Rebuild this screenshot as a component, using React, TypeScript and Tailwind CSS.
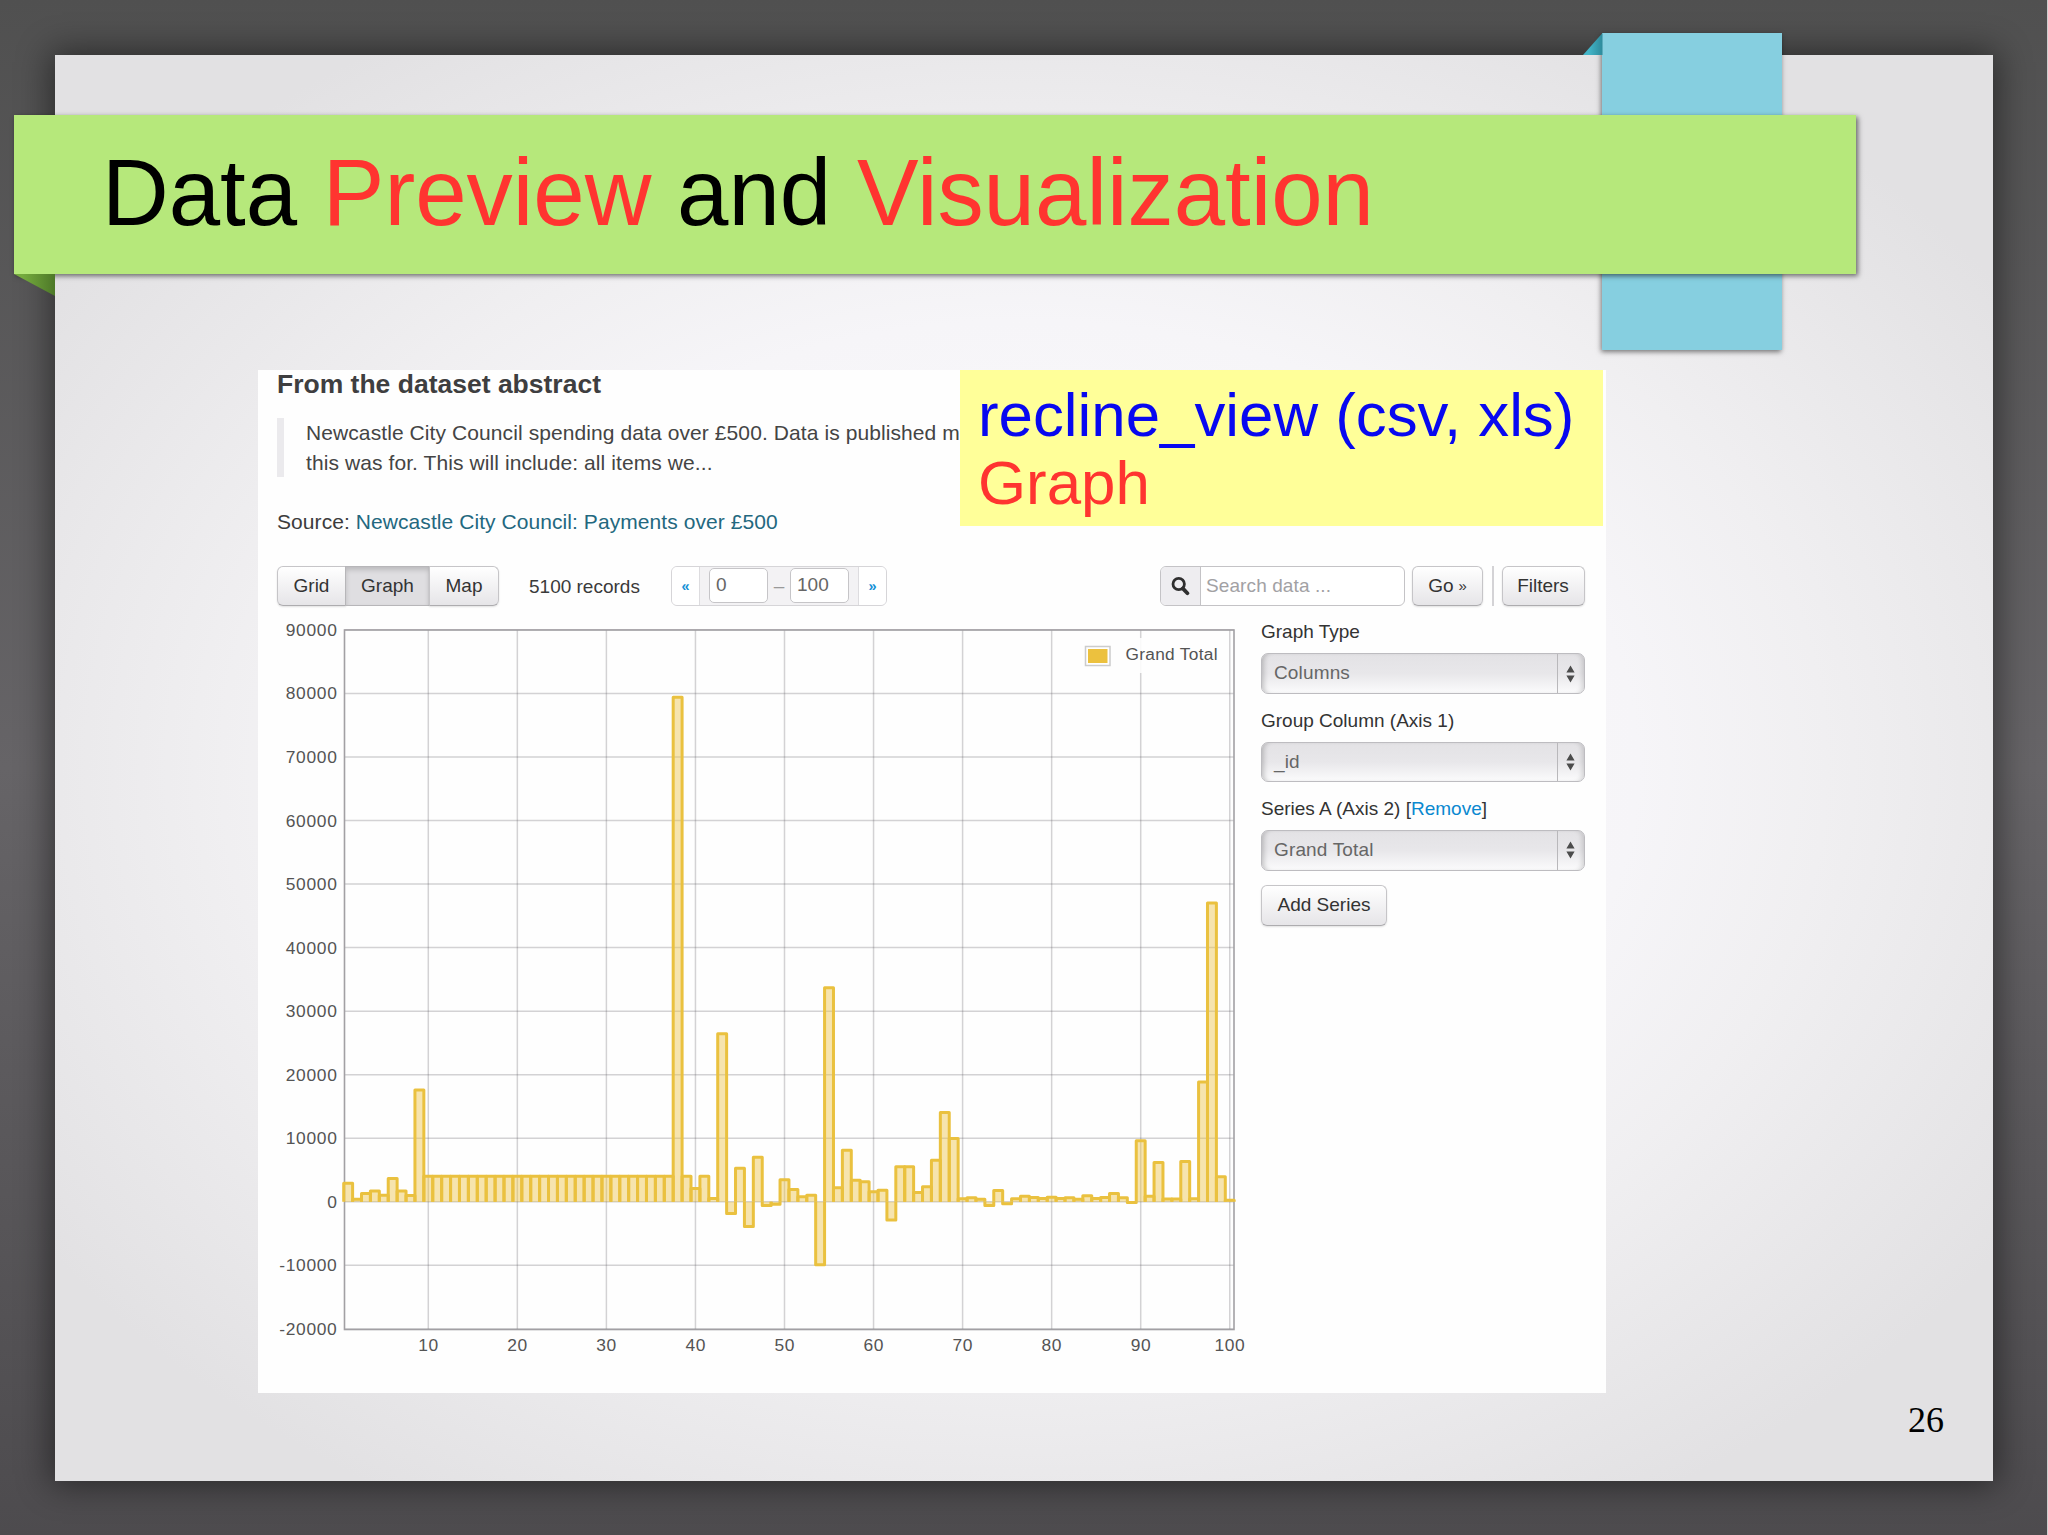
import type { ReactNode } from 'react'

const VALUES = [
  2930, 400, 1300, 1700, 1050, 3670, 1700, 1000, 17600,
  ...Array<number>(28).fill(4030),
  79400, 4030, 2100, 4030, 500, 26460, -1830, 5290, -3880, 7020, -600, -400, 3460, 1940, 800, 1050, -9900, 33700,
  2200, 8120, 3400, 3140, 1570, 1830, -2880, 5500, 5500, 1470, 2360, 6550, 14040, 9960, 470, 630, 420, -600, 1780,
  -300, 470, 890, 680, 520, 730, 520, 630, 420, 940, 520, 680, 1310, 630, -100, 9590, 890, 6180, 450, 450, 6340,
  470, 18860, 47000, 3930, 260,
]

const X_TICKS = [10, 20, 30, 40, 50, 60, 70, 80, 90, 100]
const Y_TICKS = [90000, 80000, 70000, 60000, 50000, 40000, 30000, 20000, 10000, 0, -10000, -20000]

const PLOT = { left: 67.5, right: 957, top: 23, bottom: 722.5 }

const toX = (v: number) => 151.3 + (v - 10) * 8.905
const toY = (v: number) => 594.8 - (v / 10000) * 63.55

const BUTTON =
  'flex h-full items-center justify-center border border-[#c6c5c8] border-b-[#adacaf] bg-linear-to-b from-white to-[#e6e5e8] text-[19px] text-[#333] shadow-[0_1px_2px_rgba(0,0,0,0.12)]'

function Chart() {
  return (
    <svg width="970" height="770" viewBox="0 0 970 770" className="mt-px shrink-0 font-['Liberation_Sans',sans-serif]">
      {X_TICKS.map((t) => (
        <line key={t} x1={toX(t)} x2={toX(t)} y1={PLOT.top} y2={PLOT.bottom} stroke="#545058" strokeOpacity="0.25" strokeWidth="1.5" />
      ))}
      {Y_TICKS.map((t) => (
        <line key={t} x1={PLOT.left} x2={PLOT.right} y1={toY(t)} y2={toY(t)} stroke="#545058" strokeOpacity="0.25" strokeWidth="1.5" />
      ))}
      <rect
        x={PLOT.left}
        y={PLOT.top}
        width={PLOT.right - PLOT.left}
        height={PLOT.bottom - PLOT.top}
        fill="none"
        stroke="#a2a0a4"
        strokeWidth="1.6"
      />

      {VALUES.map((v, i) => {
        const left = toX(i + 0.5)
        const right = toX(i + 1.5)
        const base = toY(0)
        return (
          <path
            key={i}
            d={`M${left} ${base}V${toY(v)}H${right}V${base}`}
            fill="#edc240"
            fillOpacity="0.42"
            stroke="#eac13f"
            strokeWidth="3"
            strokeLinejoin="round"
          />
        )
      })}

      {/* legend */}
      <rect x="803" y="31" width="146" height="35" fill="#fefefe" fillOpacity="0.88" />
      <rect x="808.5" y="39.5" width="24.5" height="19" fill="#fff" stroke="#ccc" strokeWidth="1.5" />
      <rect x="811" y="42" width="19.5" height="14" fill="#ecc13e" />
      <text x="848.5" y="52.5" fontSize="17.3" letterSpacing="0.3" fill="#545454">
        Grand Total
      </text>

      {Y_TICKS.map((t) => (
        <text key={t} x="60.5" y={toY(t) + 6} textAnchor="end" fontSize="17.4" letterSpacing="0.7" fill="#545454">
          {t}
        </text>
      ))}
      {X_TICKS.map((t) => (
        <text key={t} x={toX(t) + 0.2} y="744" textAnchor="middle" fontSize="17.4" letterSpacing="0.6" fill="#545454">
          {t}
        </text>
      ))}
    </svg>
  )
}

function SelectField({ label, value }: { label: ReactNode; value: string }) {
  return (
    <div className="mb-3">
      <p className="mb-[7px] h-[29px] text-[19px] leading-[29px] text-[#333]">{label}</p>
      <div className="flex h-[40.4px] overflow-hidden rounded-[7px] border border-[#bdbcc0] bg-linear-to-b from-[#e3e2e5] via-[#e8e7ea] to-[#fbfbfc] shadow-[inset_5px_0_5px_-3px_rgba(0,0,0,0.2),inset_-5px_0_5px_-3px_rgba(0,0,0,0.14)]">
        <span className="flex-1 pl-[12px] text-[19px] leading-[37px] tracking-[0.15px] text-[#666]">{value}</span>
        <span className="flex w-[27px] items-center justify-center border-l border-[#b9b8bb]">
          <svg width="9" height="18" viewBox="0 0 9 18" fill="#4c4c4c" className="-translate-x-px">
            <path d="M4.5 0.5L8.6 7.5H0.4zM4.5 17.5L8.6 10.5H0.4z" />
          </svg>
        </span>
      </div>
    </div>
  )
}

function Toolbar() {
  return (
    <div className="mt-[29.7px] flex h-[40.4px] items-stretch text-[19px] text-[#333]">
      <div className="flex w-[222px]">
        <div className={`${BUTTON} w-[69px] rounded-l-[6px]`}>Grid</div>
        <div className="-ml-px flex w-[85px] items-center justify-center border border-[#b7b6b9] bg-[#dfdee1] shadow-[inset_0_3px_5px_rgba(0,0,0,0.16)]">
          Graph
        </div>
        <div className={`${BUTTON} -ml-px w-[70px] rounded-r-[6px]`}>Map</div>
      </div>

      <span className="ml-[30px] w-[142px] leading-[41px] text-[#3a3a3a]">5100 records</span>

      <div className="flex w-[216px] overflow-hidden rounded-[6px] border border-[#d6d5d8] bg-[#f3f2f4]">
        <span className="w-[28px] border-r border-[#dddcdf] bg-white text-center text-[14.5px] leading-[38px] font-bold text-[#1590d6]">«</span>
        <div className="flex flex-1 pl-[9px] text-[#666]">
          <span className="mt-px h-[35px] w-[59px] rounded-[5px] border-[1.5px] border-[#c6c5c8] bg-white pl-[6px] leading-[32px]">0</span>
          <span className="w-[22px] text-center leading-[38px] text-[#999]">–</span>
          <span className="mt-px h-[35px] w-[59px] rounded-[5px] border-[1.5px] border-[#c6c5c8] bg-white pl-[6px] leading-[32px]">100</span>
        </div>
        <span className="w-[28px] border-l border-[#dddcdf] bg-white text-center text-[14.5px] leading-[38px] font-bold text-[#1590d6]">»</span>
      </div>

      <div className="ml-[273px] flex w-[245px] overflow-hidden rounded-[6px] border-[1.5px] border-[#c4c3c6] bg-white">
        <span className="flex w-[40px] items-center justify-center border-r border-[#c4c3c6] bg-[#eeedf0]">
          <svg width="19" height="20" viewBox="0 0 19 20" fill="none" stroke="#2f2f2f">
            <circle cx="7.7" cy="8" r="5.7" strokeWidth="2.8" />
            <path d="M12 12.6L16.4 17.2" strokeWidth="3.8" strokeLinecap="round" />
          </svg>
        </span>
        <span className="pl-[5px] text-[19px] leading-[38px] tracking-[0.1px] text-[#a2a1a4]">Search data ...</span>
      </div>
      <div className={`${BUTTON} ml-[7px] w-[71px] rounded-[6px]`}>
        Go <span className="ml-[5px] pt-px text-[15px]">»</span>
      </div>
      <div className="ml-[9px] w-[2px] bg-[#d4d3d6]" />
      <div className={`${BUTTON} ml-[7.5px] w-[83px] rounded-[6px]`}>Filters</div>
    </div>
  )
}

function DatasetPanel() {
  return (
    <section className="relative mt-24 ml-[203px] h-[1022.5px] w-[1348px] bg-[#fefefe] pl-[19px]">
      <h2 className="h-7 text-[26.5px] leading-[29px] font-bold text-[#3e3e40]">From the dataset abstract</h2>
      <blockquote className="mt-5 border-l-[7.5px] border-[#ebeaed] pl-[22px] text-[21px] leading-[29.6px] tracking-[0.09px] whitespace-nowrap text-[#444]">
        <p>Newcastle City Council spending data over £500. Data is published mo</p>
        <p>this was for. This will include: all items we...</p>
      </blockquote>
      <p className="mt-[29.5px] text-[21px] leading-[29.6px] tracking-[0.07px] text-[#3c3c3c]">
        Source: <span className="text-[#23687f]">Newcastle City Council: Payments over £500</span>
      </p>
      <Toolbar />
      <div className="flex">
        <Chart />
        <aside className="ml-[14px] w-[324px] pt-[11px]">
          <SelectField label="Graph Type" value="Columns" />
          <SelectField label="Group Column (Axis 1)" value="_id" />
          <SelectField
            label={
              <>
                Series A (Axis 2) [<span className="text-[#0a88d0]">Remove</span>]
              </>
            }
            value="Grand Total"
          />
          <div className="mt-[14px] h-[41px] w-[126px]">
            <div className={`${BUTTON} rounded-[6px]`}>Add Series</div>
          </div>
        </aside>
      </div>

      {/* callout pinned over the panel's corner */}
      <div className="absolute top-0 right-[3px] h-[156px] w-[643px] bg-[#ffff99] pt-[10.5px] pl-[18px] text-[61.8px] leading-[68.4px] whitespace-nowrap">
        <p className="text-[#0808f0]">recline_view (csv, xls)</p>
        <p className="text-[#ff3430]">Graph</p>
      </div>
    </section>
  )
}

export default function App() {
  return (
    <div className="h-[1535px] w-[2048px] overflow-hidden border-r border-[#d0d0d0] bg-linear-to-b from-[#505050] via-[#666467] to-[#4d4b4e] pt-[55px] pl-[55px] font-['Liberation_Sans',sans-serif]">
      <main className="relative flex h-[1426px] w-[1938px] flex-col bg-[radial-gradient(ellipse_1180px_860px_at_50%_50%,#fdfcff_0%,#f6f5f8_52%,#f0eff1_68%,#e9e8ea_84%,#e2e1e3_100%)] shadow-[0_0_32px_4px_rgba(0,0,0,0.48)]">
        {/* vertical ribbon behind the title */}
        <div className="absolute -top-[22px] left-[1547px] h-[317px] w-[179.5px] bg-[#86cfe0] shadow-[-1px_2px_5px_rgba(0,0,0,0.5)]" />
        <svg width="20" height="22" viewBox="0 0 20 22" className="absolute -top-[22px] left-[1527.5px]">
          <defs>
            <linearGradient id="tealFold" x1="0" x2="1">
              <stop offset="0.3" stopColor="#43b5c8" />
              <stop offset="1" stopColor="#2d8a9b" />
            </linearGradient>
          </defs>
          <path d="M19.5 0V22H0z" fill="url(#tealFold)" />
        </svg>

        <header className="relative mt-[60px] -ml-[41px] h-[159px] w-[1841.5px] shrink-0 bg-[#b6e87b] pl-[88px] shadow-[2px_2px_5px_rgba(0,0,0,0.55)]">
          <h1 className="origin-[0_109px] scale-y-[1.03] pt-[1px] text-[92.4px] leading-[155px] whitespace-nowrap text-black">
            Data <span className="text-[#ff3430]">Preview</span> and <span className="text-[#ff3430]">Visualization</span>
          </h1>
        </header>
        <svg width="41" height="23" viewBox="0 0 41 23" className="absolute top-[219px] -left-[41px]">
          <defs>
            <linearGradient id="greenFold" x1="0" x2="1">
              <stop offset="0.2" stopColor="#75ab3e" />
              <stop offset="1" stopColor="#4d7828" />
            </linearGradient>
          </defs>
          <path d="M0 0H41V22z" fill="url(#greenFold)" />
        </svg>

        <DatasetPanel />

        <footer className="absolute right-[49px] bottom-[43.5px] font-['Liberation_Serif',serif] text-[36px] leading-none text-black">26</footer>
      </main>
    </div>
  )
}
